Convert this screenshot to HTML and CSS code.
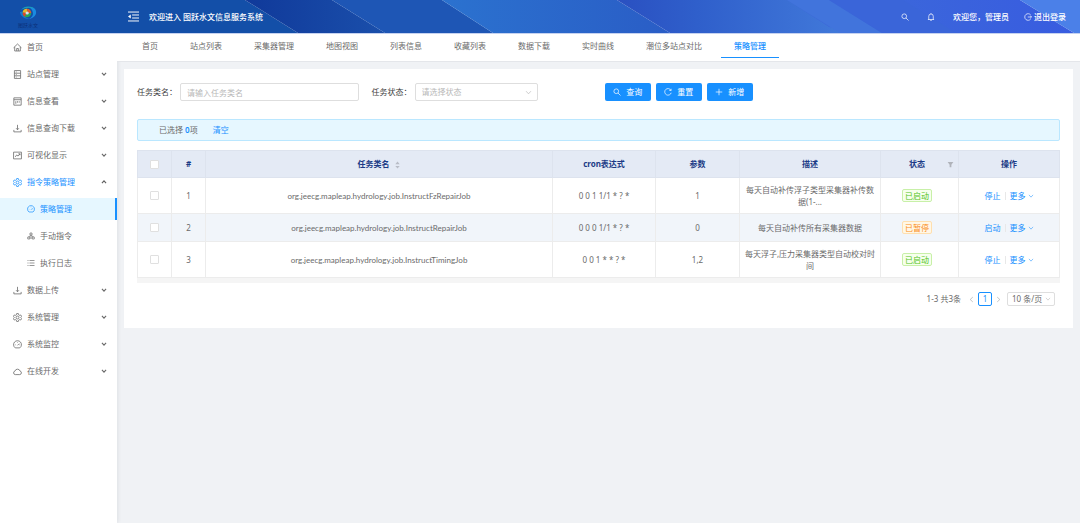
FILE: index.html
```html
<!DOCTYPE html>
<html lang="zh-CN">
<head>
<meta charset="utf-8">
<meta name="viewport" content="width=device-width, initial-scale=1">
<title>图跃水文信息服务系统</title>
<link rel="stylesheet" href="styles.css">
</head>
<body>
<svg class="sprite" aria-hidden="true">
  <symbol id="i-home" viewBox="0 0 16 16"><path d="M1 8.500 8 1.800l7 6.700M3 7v7.200h10V7M6.500 14V9.800h3V14"/></symbol>
  <symbol id="i-doc" viewBox="0 0 16 16"><path d="M2.500 1h11v14h-11zM2.500 5.700h11M2.500 10.300h11M5 3.500h1.500M5 8h1.500M5 12.600h1.500"/></symbol>
  <symbol id="i-board" viewBox="0 0 16 16"><path d="M1.500 1.500h13v13h-13zM1.500 4.800h13M5 7.500v4.500M8 7.500v2.500M11 7.500v2.500"/></symbol>
  <symbol id="i-down" viewBox="0 0 16 16"><path d="M8 1.500v8.500M5.500 7.500 8 10.300l2.500-2.800M1.500 10.500v3.500h13v-3.500"/></symbol>
  <symbol id="i-chart" viewBox="0 0 16 16"><path d="M1 2h14v12H1zM4 10.500l2.500-3.500 2.500 2 3.500-4M9.500 5h3v2.500"/></symbol>
  <symbol id="i-gear" viewBox="0 0 16 16"><path d="M6.500 1h3l.5 2.200 1.700 1 2.100-.7 1.500 2.600L13.800 8l1.500 1.900-1.500 2.600-2.100-.7-1.700 1-.5 2.200h-3L6 12.800l-1.700-1-2.100.7L.7 9.900 2.200 8 .7 6.100l1.500-2.600 2.100.7 1.700-1z"/><circle cx="8" cy="8" r="2.600"/></symbol>
  <symbol id="i-dash" viewBox="0 0 16 16"><path d="M4 14h8A7 7 0 1 0 4 14zM8 9.500l3-3M3.500 8.500h1M8 3.500v1M11.500 8.500h1"/></symbol>
  <symbol id="i-tree" viewBox="0 0 16 16"><path d="M6 2h4v4H6zM1.500 10h4v4h-4zM10.500 10h4v4h-4zM8 6v2.500M3.500 10l1.500-2h6l1.500 2M6 12h4"/></symbol>
  <symbol id="i-list" viewBox="0 0 16 16"><path d="M5 3h10M5 8h10M5 13h10M1 3h2M1 8h2M1 13h2"/></symbol>
  <symbol id="i-cloud" viewBox="0 0 16 16"><path d="M4 13.500a3.200 3.200 0 0 1-.5-6.300 4.700 4.700 0 0 1 9 0 3.200 3.200 0 0 1-.5 6.300z"/></symbol>
  <symbol id="i-chev" viewBox="0 0 16 16"><path d="M2.500 5 8 11l5.500-6"/></symbol>
  <symbol id="i-search" viewBox="0 0 16 16"><circle cx="6.500" cy="6.500" r="4.700"/><path d="m10 10 5 5"/></symbol>
  <symbol id="i-bell" viewBox="0 0 16 16"><path d="M1.800 13h12.400M3.500 13V6.500a4.500 4.500 0 0 1 9 0V13M8 .5V2M6.500 15.200h3"/></symbol>
  <symbol id="i-logout" viewBox="0 0 16 16"><path d="M13.500 4.200a6.600 6.600 0 1 0 0 7.600M7.500 8H15M12.800 5.800 15 8l-2.200 2.200"/></symbol>
  <symbol id="i-fold" viewBox="0 0 16 16"><path d="M0 1.500h16M6 5.800h10M6 10.200h10M0 14.500h16"/><path class="solid" d="M4 5v6L0 8z"/></symbol>
  <symbol id="i-reload" viewBox="0 0 16 16"><path d="M13.800 4.500a6.600 6.600 0 1 0 .6 5M14.200 1.500v3.500h-3.500"/></symbol>
  <symbol id="i-plus" viewBox="0 0 16 16"><path d="M8 1.500v13M1.500 8h13"/></symbol>
  <symbol id="i-sort" viewBox="0 0 16 16"><path class="solid" d="M8 0l5 6H3zM8 16l5-6H3z"/></symbol>
  <symbol id="i-filter" viewBox="0 0 16 16"><path class="solid" d="M1.500 2h13L10 8.500V14H6V8.500z"/></symbol>
  <symbol id="i-logo" viewBox="0 0 32 26"><path fill="#1a8be0" d="M17 2c10-1 15 5 14 11s-7 10-13 11c6-4 8-7 7-12S21 4 17 2z"/><path fill="#1b9fb8" d="M3 7C9-1 22-1 28 5 20 2 11 3 3 7z"/><path fill="#1478d0" d="M1 11c1 8 8 13 18 13-8-2-12-6-13-14z"/><circle cx="14" cy="13" r="8" fill="#2aa557"/><path fill="#e9b52c" d="M6 12a8 8 0 0 1 8-7v8z"/><path fill="#d8452f" d="M6 12l7 1-3 7a8 8 0 0 1-4-8z"/><path fill="#e0572e" d="M14 5a8 8 0 0 1 8 8h-7z"/><circle cx="14.500" cy="13" r="3" fill="#cfe0f4"/></symbol>
</svg>

<header class="topbar">
  <svg class="topbar-art" viewBox="0 0 1080 33" preserveAspectRatio="none" aria-hidden="true">
    <defs>
      <linearGradient id="g1"><stop offset="0" stop-color="#10399a"/><stop offset="1" stop-color="#1a4fab"/></linearGradient>
      <linearGradient id="g2"><stop offset="0" stop-color="#2b72cf"/><stop offset="1" stop-color="#2a5dc6"/></linearGradient>
      <linearGradient id="g3"><stop offset="0" stop-color="#2a50c1"/><stop offset=".3" stop-color="#2f5fcb"/><stop offset="1" stop-color="#4680de"/></linearGradient>
      <linearGradient id="g4"><stop offset="0" stop-color="#3d6cd8"/><stop offset="1" stop-color="#385ce0"/></linearGradient>
    </defs>
    <path fill="#134fa8" d="M0 0h245l53 33H0z"/>
    <path fill="url(#g1)" d="M245 0h87l53 33h-87z"/>
    <path fill="#1e56b5" d="M332 0h110l51 33H385z"/>
    <path fill="url(#g2)" d="M442 0h175l53 33H493z"/>
    <path fill="url(#g3)" d="M617 0h212l53 33H670z"/>
    <path fill="url(#g4)" d="M787 0h233l54 33H882L829 27z"/>
    <path fill="#4174dc" d="M787 0h42l53 33h-42z"/>
    <path fill="#3a65d9" d="M829 0h74l53 33h-74z"/>
    <path fill="#4b80e8" d="M1020 0h60v33h-6z"/>
  </svg>
  <div class="brand">
    <svg class="brand-mark"><use href="#i-logo"/></svg>
    <span class="brand-name">图跃水文</span>
  </div>
  <button class="bare fold" aria-label="收起菜单"><svg class="icon"><use href="#i-fold"/></svg></button>
  <h1 class="welcome">欢迎进入 图跃水文信息服务系统</h1>
  <div class="tools">
    <button class="bare" aria-label="搜索"><svg class="icon"><use href="#i-search"/></svg></button>
    <button class="bare bell" aria-label="通知"><svg class="icon"><use href="#i-bell"/></svg></button>
    <span class="user">欢迎您，管理员</span>
    <a class="logout" href="#"><svg class="icon"><use href="#i-logout"/></svg>退出登录</a>
  </div>
</header>

<div class="body">
  <nav class="side" aria-label="主菜单">
    <a class="item" href="#"><svg class="icon"><use href="#i-home"/></svg>首页</a>
    <a class="item" href="#"><svg class="icon"><use href="#i-doc"/></svg>站点管理<svg class="arrow"><use href="#i-chev"/></svg></a>
    <a class="item" href="#"><svg class="icon"><use href="#i-board"/></svg>信息查看<svg class="arrow"><use href="#i-chev"/></svg></a>
    <a class="item" href="#"><svg class="icon"><use href="#i-down"/></svg>信息查询下载<svg class="arrow"><use href="#i-chev"/></svg></a>
    <a class="item" href="#"><svg class="icon"><use href="#i-chart"/></svg>可视化显示<svg class="arrow"><use href="#i-chev"/></svg></a>
    <a class="item open" href="#"><svg class="icon"><use href="#i-gear"/></svg>指令策略管理<svg class="arrow"><use href="#i-chev"/></svg></a>
    <a class="item sub current" href="#"><svg class="icon"><use href="#i-dash"/></svg>策略管理</a>
    <a class="item sub" href="#"><svg class="icon"><use href="#i-tree"/></svg>手动指令</a>
    <a class="item sub" href="#"><svg class="icon"><use href="#i-list"/></svg>执行日志</a>
    <a class="item" href="#"><svg class="icon"><use href="#i-down"/></svg>数据上传<svg class="arrow"><use href="#i-chev"/></svg></a>
    <a class="item" href="#"><svg class="icon"><use href="#i-gear"/></svg>系统管理<svg class="arrow"><use href="#i-chev"/></svg></a>
    <a class="item" href="#"><svg class="icon"><use href="#i-dash"/></svg>系统监控<svg class="arrow"><use href="#i-chev"/></svg></a>
    <a class="item" href="#"><svg class="icon"><use href="#i-cloud"/></svg>在线开发<svg class="arrow"><use href="#i-chev"/></svg></a>
  </nav>

  <div class="content">
    <nav class="tabs" aria-label="页签">
      <a href="#">首页</a><a href="#">站点列表</a><a href="#">采集器管理</a><a href="#">地图视图</a><a href="#">列表信息</a><a href="#">收藏列表</a><a href="#">数据下载</a><a href="#">实时曲线</a><a href="#">潮位多站点对比</a><a class="active" href="#">策略管理</a>
    </nav>

    <main class="card">
      <form class="query">
        <div class="field"><label for="job">任务类名：</label><input id="job" type="text" placeholder="请输入任务类名"></div>
        <div class="field"><label for="state">任务状态：</label><div class="select"><select id="state"><option>请选择状态</option></select><svg class="caret"><use href="#i-chev"/></svg></div></div>
        <div class="actions">
          <button type="button" class="primary"><svg class="icon"><use href="#i-search"/></svg>查询</button>
          <button type="button" class="primary"><svg class="icon"><use href="#i-reload"/></svg>重置</button>
          <button type="button" class="primary"><svg class="icon"><use href="#i-plus"/></svg>新增</button>
        </div>
      </form>

      <div class="alert"><span>已选择 <b>0</b>项</span><a href="#">清空</a></div>

      <div class="table-wrap">
        <table>
          <colgroup><col class="c-tick"><col class="c-num"><col><col class="c-cron"><col class="c-arg"><col class="c-desc"><col class="c-state"><col class="c-ops"></colgroup>
          <thead>
            <tr>
              <th><input type="checkbox" aria-label="全选"></th>
              <th>#</th>
              <th>任务类名<svg class="sort"><use href="#i-sort"/></svg></th>
              <th>cron表达式</th>
              <th>参数</th>
              <th>描述</th>
              <th class="filtered">状态<svg class="filter"><use href="#i-filter"/></svg></th>
              <th>操作</th>
            </tr>
          </thead>
          <tbody>
            <tr>
              <td><input type="checkbox" aria-label="选择第1行"></td><td>1</td><td class="job">org.jeecg.mapleap.hydrology.job.InstructFzRepairJob</td><td>0 0 1 1/1 * ? *</td><td>1</td><td>每天自动补传浮子类型采集器补传数据(1-...</td><td><span class="tag green">已启动</span></td>
              <td><span class="ops"><a href="#">停止</a><i></i><a href="#">更多<svg><use href="#i-chev"/></svg></a></span></td>
            </tr>
            <tr class="alt">
              <td><input type="checkbox" aria-label="选择第2行"></td><td>2</td><td class="job">org.jeecg.mapleap.hydrology.job.InstructRepairJob</td><td>0 0 0 1/1 * ? *</td><td>0</td><td>每天自动补传所有采集器数据</td><td><span class="tag orange">已暂停</span></td>
              <td><span class="ops"><a href="#">启动</a><i></i><a href="#">更多<svg><use href="#i-chev"/></svg></a></span></td>
            </tr>
            <tr>
              <td><input type="checkbox" aria-label="选择第3行"></td><td>3</td><td class="job">org.jeecg.mapleap.hydrology.job.InstructTimingJob</td><td>0 0 1 * * ? *</td><td>1,2</td><td>每天浮子,压力采集器类型自动校对时间</td><td><span class="tag green">已启动</span></td>
              <td><span class="ops"><a href="#">停止</a><i></i><a href="#">更多<svg><use href="#i-chev"/></svg></a></span></td>
            </tr>
          </tbody>
        </table>
      </div>

      <div class="pager">
        <span>1-3 共3条</span>
        <button class="bare step prev" aria-label="上一页"><svg><use href="#i-chev"/></svg></button>
        <button class="page">1</button>
        <button class="bare step next" aria-label="下一页"><svg><use href="#i-chev"/></svg></button>
        <div class="select size"><select aria-label="每页条数"><option>10 条/页</option></select><svg class="caret"><use href="#i-chev"/></svg></div>
      </div>
    </main>
  </div>
</div>
</body>
</html>
```
FILE: styles.css
```css
* { box-sizing: border-box; }

body {
  margin: 0;
  min-height: 100vh;
  display: flex;
  flex-direction: column;
  background: #f0f2f5;
  color: #6a6a6a;
  font: 8px/12px "Noto Sans", "Noto Sans CJK SC", sans-serif;
}

a { color: inherit; text-decoration: none; }
button, input, select { font: inherit; color: inherit; margin: 0; }
svg { fill: none; stroke: currentColor; stroke-width: 1.4; }
.solid { fill: currentColor; stroke: none; }
.sprite { display: none; }
.icon { width: 8px; height: 8px; flex: none; }
.bare { display: flex; padding: 0; border: 0; background: none; }

/* top bar */
.topbar {
  position: relative;
  display: flex;
  align-items: center;
  height: 34px;
  border-bottom: 1px solid #c5d2f0;
  color: #fff;
}
.topbar > * { position: relative; }
.topbar .topbar-art { position: absolute; inset: 0; width: 100%; height: 100%; stroke: none; }
.brand {
  width: 128px;
  padding-left: 18px;
  display: flex;
  flex-direction: column;
  align-items: flex-start;
  gap: 2px;
}
.brand-mark { width: 20px; height: 14px; stroke: none; }
.brand-name { width: 20px; color: #0c3078; font-size: 5px; line-height: 6px; white-space: nowrap; }
.fold .icon { width: 11px; height: 11px; }
.welcome { margin: 0 0 0 10px; font-size: 8px; font-weight: 500; }
.tools { margin-left: auto; padding-right: 14px; display: flex; align-items: center; }
.bell { margin-left: 18px; }
.user { margin-left: 18px; font-weight: 500; }
.logout { margin-left: 15px; display: flex; align-items: center; gap: 2px; font-weight: 500; }

.body { flex: 1; display: flex; }

/* side menu */
.side {
  flex: none;
  width: 117px;
  padding-top: 2px;
  display: flex;
  flex-direction: column;
  gap: 5px;
  background: #fff;
  box-shadow: 1px 0 4px rgba(0, 21, 41, .08);
}
.item { display: flex; align-items: center; gap: 5px; height: 22px; padding: 0 10px 0 13px; }
.item .icon { width: 9px; height: 9px; }
.sub { padding-left: 27px; }
.sub .icon { width: 8px; height: 8px; }
.arrow { width: 6px; height: 6px; margin-left: auto; stroke-width: 3; }
.open { color: #1890ff; }
.open .arrow { color: #606060; transform: rotate(180deg); }
.current { color: #1890ff; background: #e6f7ff; border-right: 2px solid #1890ff; }

/* content */
.content { flex: 1; min-width: 0; }
.tabs {
  display: flex;
  gap: 6px;
  padding: 0 12px;
  height: 28px;
  background: #fff;
  border-bottom: 1px solid #e4e6ea;
  white-space: nowrap;
}
.tabs a { height: 24px; padding: 6px 13px; }
.tabs .active { color: #1890ff; border-bottom: 1px solid #1890ff; font-weight: 500; }

.card { margin: 7px 7px 0; padding: 14px 13px 22px; background: #fff; }

.query { display: grid; grid-template-columns: 24% 18% 1fr; column-gap: 13px; }
.field { display: flex; align-items: center; gap: 3px; color: #404040; }
.field label { flex: none; width: 40px; white-space: nowrap; }
.field input, .select select {
  width: 100%;
  min-width: 0;
  height: 18px;
  padding: 0 6px;
  border: 1px solid #dedede;
  border-radius: 2px;
  background: #fff;
  outline: none;
}
.field input::placeholder, .field select { color: #b8b8b8; }
.select { position: relative; flex: 1; }
.select select { appearance: none; }
.caret { position: absolute; right: 6px; top: 50%; width: 7px; height: 7px; margin-top: -3px; color: #b0b0b0; pointer-events: none; }
.actions { display: flex; gap: 5px; margin-left: 54px; }
.primary {
  width: 46px;
  height: 18px;
  display: flex;
  align-items: center;
  justify-content: center;
  gap: 5px;
  padding: 0;
  border: 0;
  border-radius: 2px;
  background: #1890ff;
  color: #fff;
}

.alert {
  display: flex;
  gap: 15px;
  margin-top: 18px;
  padding: 4px 21px;
  border: 1px solid #bae7ff;
  border-radius: 2px;
  background: #e6f7ff;
}
.alert b { color: #1890ff; font-weight: 600; }
.alert a { color: #1890ff; }

/* table */
.table-wrap { margin-top: 9px; border-bottom: 5px solid #f5f5f5; }
table { width: 100%; table-layout: fixed; border-collapse: collapse; text-align: center; }
.c-tick, .c-num { width: 34px; }
.c-cron { width: 103px; }
.c-arg { width: 84px; }
.c-desc { width: 141px; }
.c-state { width: 78px; }
.c-ops { width: 101px; }
th, td { padding: 0 3px; border: 1px solid #ececec; vertical-align: middle; }
th { height: 27px; background: #e4eaf5; border-color: #dde3ee; color: #1b3a86; font-weight: 700; }
td { height: 36px; }
.job { font-family: Lato, "Noto Sans", sans-serif; }
.alt td { height: 28px; background: #f1f5fa; }
th input, td input {
  appearance: none;
  display: block;
  width: 9px;
  height: 9px;
  margin: 0 auto;
  border: 1px solid #e0e0e0;
  border-radius: 1px;
  background: #fff;
}
.sort { width: 7px; height: 8px; margin-left: 4px; color: #b8bcc6; vertical-align: middle; }
.filter { position: absolute; right: 4px; top: 10px; width: 7px; height: 7px; color: #b0b3ba; }
.tag { display: inline-block; padding: 0 2px; border: 1px solid; border-radius: 2px; line-height: 11px; }
.filtered, td:nth-child(7) { position: relative; padding-right: 8px; }
.green { color: #52c41a; background: #f6ffed; border-color: #c8f0a8; }
.orange { color: #fa8c16; background: #fff7e6; border-color: #ffdfae; }
.ops { display: inline-flex; align-items: center; color: #1890ff; }
.ops i { width: 1px; height: 8px; margin: 0 4px; background: #e8e8e8; }
.ops svg { width: 6px; height: 6px; margin-left: 2px; }

/* pager */
.pager { display: flex; justify-content: flex-end; align-items: center; gap: 3px; margin-top: 9px; padding-right: 5px; }
.pager > span { margin-right: 4px; }
.step svg { width: 7px; height: 7px; color: #a0a0a0; }
.prev svg { transform: rotate(90deg); }
.next svg { transform: rotate(-90deg); }
.page { width: 14px; height: 14px; padding: 0; border: 1px solid #1890ff; border-radius: 2px; background: #fff; color: #1890ff; }
.size { flex: none; width: 48px; margin-left: 2px; }
.size select { height: 14px; padding: 0 4px; }
.size .caret { right: 4px; width: 6px; height: 6px; }
```
